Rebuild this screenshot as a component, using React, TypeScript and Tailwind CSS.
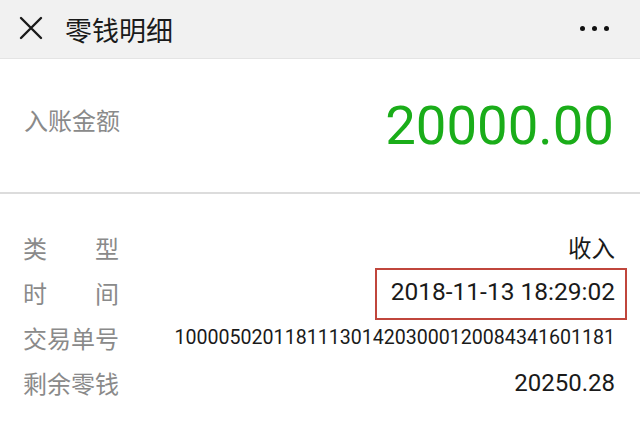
import React from "react";

const cjk = { fontFamily: '"Noto Sans CJK SC", "Noto Sans", sans-serif' };
const num = { fontFamily: 'Roboto, "Noto Sans CJK SC", sans-serif' };

function Row({ label, children, justify }: { label: string; children: React.ReactNode; justify?: boolean }) {
  return (
    <div className="flex h-[45px] items-center justify-between">
      {justify ? (
        <div className="flex w-[96px] justify-between text-[24px] leading-none text-[#8a8a8a]" style={cjk}>
          {label.split("").map((c, i) => (
            <span key={i}>{c}</span>
          ))}
        </div>
      ) : (
        <div className="text-[24px] leading-none text-[#8a8a8a]" style={cjk}>
          {label}
        </div>
      )}
      {children}
    </div>
  );
}

export default function App() {
  return (
    <div className="h-[443px] w-[640px] overflow-hidden bg-white">
      <div className="flex h-[59px] items-center justify-between border-b border-[#e4e4e4] bg-[#f1f1f1] pl-[19px] pr-[31px]">
        <div className="flex items-center">
          <svg width="24" height="24" viewBox="0 0 24 24" className="mb-[2px]">
            <path d="M2 2 L22 22 M22 2 L2 22" stroke="#1a1a1a" strokeWidth="2.4" strokeLinecap="round" />
          </svg>
          <span className="ml-[22px] text-[27px] leading-none text-[#1a1a1a]" style={cjk}>
            零钱明细
          </span>
        </div>
        <div className="flex items-center gap-[7px] pb-[2px]">
          <span className="h-[5px] w-[5px] rounded-full bg-[#111]" />
          <span className="h-[5px] w-[5px] rounded-full bg-[#111]" />
          <span className="h-[5px] w-[5px] rounded-full bg-[#111]" />
        </div>
      </div>

      <div className="flex h-[135px] items-center justify-between border-b-2 border-[#dcdcdc] pl-[24px] pr-[26px]">
        <span className="mb-[11px] text-[24px] leading-none text-[#8a8a8a]" style={cjk}>
          入账金额
        </span>
        <span className="text-[54.5px] leading-none text-[#1aad19]" style={num}>
          20000.00
        </span>
      </div>

      <div className="pl-[23px] pr-[25px] pt-[31px]">
        <Row label="类型" justify>
          <span className="text-[23.5px] leading-none text-[#1a1a1a]" style={cjk}>
            收入
          </span>
        </Row>
        <Row label="时间" justify>
          <span className="relative text-[24.5px] leading-none text-[#1a1a1a]" style={num}>
            2018-11-13 18:29:02
            <span className="absolute -bottom-[15px] -left-[16px] -right-[12px] -top-[12px] border-2 border-[#c0463c]" />
          </span>
        </Row>
        <Row label="交易单号">
          <span className="text-[19.6px] leading-none text-[#1a1a1a]" style={num}>
            1000050201181113014203000120084341601181
          </span>
        </Row>
        <Row label="剩余零钱">
          <span className="text-[24px] leading-none text-[#1a1a1a]" style={num}>
            20250.28
          </span>
        </Row>
      </div>
    </div>
  );
}
